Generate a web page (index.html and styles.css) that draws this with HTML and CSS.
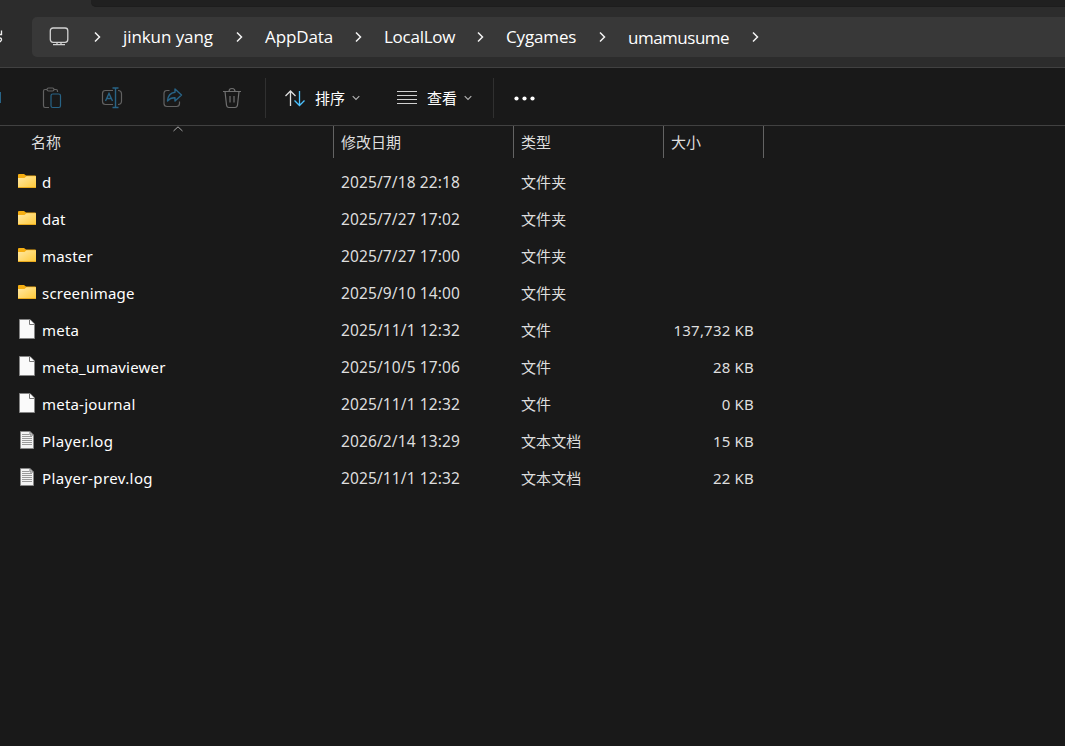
FILE: index.html
```html
<!DOCTYPE html>
<html lang="zh-CN">
<head>
<meta charset="utf-8">
<title>umamusume</title>
<link rel="stylesheet" href="styles.css">
</head>
<body>
<svg class="defs" width="0" height="0">
  <defs>
    <linearGradient id="folder-fill" x1="0" y1="0" x2="1" y2="1"><stop offset="0" stop-color="#ffe9a6"/><stop offset="1" stop-color="#ffc937"/></linearGradient>
    <symbol id="chevron" viewBox="0 0 8 12"><path d="M2 1.5L6.5 6L2 10.5" fill="none" stroke="#f2f2f2" stroke-width="1.5"/></symbol>
    <symbol id="down" viewBox="0 0 8 6"><path d="M.7 1.2L4 4.5L7.3 1.2" fill="none" stroke="#b4b4b4" stroke-width="1.1"/></symbol>
    <symbol id="folder" viewBox="0 0 18 14"><path d="M0 1Q0 0 1 0H6L8 1.5H17Q18 1.5 18 2.5V6H0Z" fill="#f5ae12"/><path d="M0 4H6.5L8.5 2.2H18V14H0Z" fill="url(#folder-fill)"/><path d="M0 13.5H18" stroke="#e9aa1e"/></symbol>
    <symbol id="file" viewBox="0 0 16 20"><path d="M.5 .5H11L15.5 5V19.5H.5Z" fill="#fafafa" stroke="#858585"/><path d="M10.5 .5V5.5H15.5" fill="#fff" stroke="#777"/></symbol>
    <symbol id="text-file" viewBox="0 0 14 18"><path d="M.5 .5H10L13.5 4V17.5H.5Z" fill="#f3f3f3" stroke="#888"/><path d="M10 .5V4H13.5" fill="none" stroke="#777"/><path d="M2 3.5H9M2 5.5H12M2 7.5H12M2 9.5H12M2 11.5H12M2 13.5H12" stroke="#999"/></symbol>
  </defs>
</svg>
<div class="window">
  <div class="tabs"><div class="tab-rest"></div></div>
  <div class="nav">
    <svg class="refresh" width="4" height="16" viewBox="0 0 4 16"><path d="M1.5 1.5V5.5H0M0 9Q1.6 9 1.5 11L0 13" fill="none" stroke="#eee" stroke-width="1.3"/></svg>
    <div class="address">
      <svg class="monitor" width="20" height="20" viewBox="0 0 20 20" fill="none" stroke="#d2d2d2" stroke-width="1.3"><rect x="1.3" y="1" width="17.5" height="14.3" rx="2.7"/><path d="M8 15.5V18M12 15.5V18M4 17.7H16"/></svg>
      <svg class="chev"><use href="#chevron"/></svg>
      <span class="crumb user">jinkun yang</span><svg class="chev"><use href="#chevron"/></svg>
      <span class="crumb appdata">AppData</span><svg class="chev"><use href="#chevron"/></svg>
      <span class="crumb locallow">LocalLow</span><svg class="chev"><use href="#chevron"/></svg>
      <span class="crumb cygames">Cygames</span><svg class="chev"><use href="#chevron"/></svg>
      <span class="crumb current">umamusume</span><svg class="chev"><use href="#chevron"/></svg>
    </div>
  </div>
  <div class="toolbar">
    <div class="edge"></div>
    <div class="tools">
      <svg width="20" height="22" viewBox="0 0 20 22" fill="none" stroke="#626262" stroke-width="1.2"><path d="M5 2.5H3Q1.5 2.5 1.5 4V18.5Q1.5 20.5 3 20.5H7M12 2.5H14Q15.5 2.5 15.5 4V5"/><rect x="5" y="1" width="7" height="3" rx="1.5"/><rect x="9" y="7" width="9.5" height="13.5" rx="1.8" stroke="#286487"/></svg>
      <svg width="22" height="22" viewBox="0 0 22 22" fill="none" stroke="#626262" stroke-width="1.2"><path d="M12 3.5H4.5Q1.5 3.5 1.5 6.5V14.5Q1.5 17.5 4.5 17.5H12M17 3.5Q20.5 3.5 20.5 7V14Q20.5 17.5 17 17.5"/><path d="M4.5 14L8 6.5L11.5 14M6 11.5H10M11.5 1H17.5M14.5 1V20.5M11.5 20.5H17.5" stroke="#286487" stroke-width="1.4"/></svg>
      <svg width="20" height="22" viewBox="0 0 20 22" fill="none" stroke="#626262" stroke-width="1.2"><path d="M6.5 3.5H4Q1 3.5 1 6.5V16.5Q1 19.5 4 19.5H13.5Q16.5 19.5 16.5 16.5V14.5"/><path d="M12 2L18.5 8L12 14V10.8Q7.5 10.5 4.5 14Q5 6 12 5.2Z" stroke="#286487" stroke-width="1.4" stroke-linejoin="round"/></svg>
      <svg width="20" height="22" viewBox="0 0 20 22" fill="none" stroke="#707070" stroke-width="1.2"><path d="M1 4.5H19M7 4.5Q7 1.5 10 1.5T13 4.5M3 4.5L4.5 18Q4.8 20.5 7 20.5H13Q15.2 20.5 15.5 18L17 4.5M8 9V15.5M12 9V15.5"/></svg>
    </div>
    <div class="divider"></div>
    <div class="command sort">
      <svg width="22" height="18" viewBox="0 0 22 18" fill="none" stroke-width="1.3"><path d="M6.5 17V2M1.5 7L6.5 2L11.5 7" stroke="#ddd"/><path d="M15.5 2V16.5M10.5 11.5L15.5 16.5L20.5 11.5" stroke="#4cc2ff"/></svg>
      <span>排序</span><svg class="down"><use href="#down"/></svg>
    </div>
    <div class="command view">
      <svg width="20" height="14" viewBox="0 0 20 14"><path d="M0 .5H20M0 4.5H20M0 8.5H20M0 12.5H20" stroke="#d0d0d0" stroke-width="1.1"/></svg>
      <span>查看</span><svg class="down"><use href="#down"/></svg>
    </div>
    <div class="divider"></div>
    <svg class="more" width="22" height="6" viewBox="0 0 22 6" fill="#fff"><circle cx="2.5" cy="3.5" r="2.1"/><circle cx="10.5" cy="3.5" r="2.1"/><circle cx="18.5" cy="3.5" r="2.1"/></svg>
  </div>
  <div class="columns">
    <div class="heading name-heading">名称<svg class="sort-mark" width="10" height="6" viewBox="0 0 10 6"><path d="M.5 5L5 .8L9.5 5" fill="none" stroke="#aaa"/></svg></div>
    <div class="heading">修改日期</div><div class="heading">类型</div><div class="heading">大小</div>
  </div>
  <div class="files">
    <div class="row"><svg class="folder"><use href="#folder"/></svg><span class="name">d</span><span class="date">2025/7/18 22:18</span><span class="type">文件夹</span><span class="size"></span></div>
    <div class="row"><svg class="folder"><use href="#folder"/></svg><span class="name">dat</span><span class="date">2025/7/27 17:02</span><span class="type">文件夹</span><span class="size"></span></div>
    <div class="row"><svg class="folder"><use href="#folder"/></svg><span class="name">master</span><span class="date">2025/7/27 17:00</span><span class="type">文件夹</span><span class="size"></span></div>
    <div class="row"><svg class="folder"><use href="#folder"/></svg><span class="name">screenimage</span><span class="date">2025/9/10 14:00</span><span class="type">文件夹</span><span class="size"></span></div>
    <div class="row"><svg class="file"><use href="#file"/></svg><span class="name">meta</span><span class="date">2025/11/1 12:32</span><span class="type">文件</span><span class="size">137,732 KB</span></div>
    <div class="row"><svg class="file"><use href="#file"/></svg><span class="name">meta_umaviewer</span><span class="date">2025/10/5 17:06</span><span class="type">文件</span><span class="size">28 KB</span></div>
    <div class="row"><svg class="file"><use href="#file"/></svg><span class="name">meta-journal</span><span class="date">2025/11/1 12:32</span><span class="type">文件</span><span class="size">0 KB</span></div>
    <div class="row"><svg class="text-file"><use href="#text-file"/></svg><span class="name log">Player.log</span><span class="date">2026/2/14 13:29</span><span class="type">文本文档</span><span class="size">15 KB</span></div>
    <div class="row"><svg class="text-file"><use href="#text-file"/></svg><span class="name log">Player-prev.log</span><span class="date">2025/11/1 12:32</span><span class="type">文本文档</span><span class="size">22 KB</span></div>
  </div>
</div>
</body>
</html>
```
FILE: styles.css
```css
* { box-sizing: border-box; }
body { margin: 0; background: #191919; color: #fff; font: 15px/20px "Noto Sans", "Noto Sans CJK SC", sans-serif; }
svg { display: block; flex: none; }
.defs { position: absolute; }
.window { height: 746px; overflow: hidden; display: flex; flex-direction: column; }
.tabs { height: 7px; background: #2c2c2c; padding-left: 91px; }
.tab-rest { height: 7px; background: #202020; border-bottom-left-radius: 5px; border-bottom: 1px solid #1d1d1d; }
.nav { height: 61px; background: #2c2c2c; border-bottom: 1px solid #414141; padding-top: 10px; display: flex; }
.refresh { margin: 12px 28px 0 0; }
.address { flex: 1; height: 40px; background: #383838; border-radius: 5px 0 0 5px; display: flex; align-items: center; padding-left: 17px; }
.monitor { margin-right: 24px; }
.chev { width: 8px; height: 12px; }
.crumb { margin: 0 22px; font-family: "Open Sans", sans-serif; font-size: 17px; line-height: 24px; white-space: nowrap; }
.user { width: 90px; letter-spacing: -.08px; }
.appdata { width: 67px; letter-spacing: -.12px; }
.locallow { width: 70px; letter-spacing: -.25px; }
.cygames { width: 70px; letter-spacing: -.15px; }
.current { width: 101px; padding-top: 1px; letter-spacing: -.5px; }
.toolbar { height: 58px; border-bottom: 1px solid #414141; display: flex; align-items: center; padding-top: 3px; }
.edge { width: 1px; height: 11px; background: #286487; margin: -2px 41px 0 0; }
.tools { width: 223px; display: flex; justify-content: space-between; padding-right: 23px; }
.divider { width: 1px; height: 40px; background: #303030; }
.command { display: flex; align-items: center; font-family: "Noto Sans CJK SC", sans-serif; }
.sort { margin-left: 18px; }
.sort span { margin: 0 7px 0 9px; }
.view { margin: 0 21px 0 37px; }
.view span { margin: 0 7px 0 10px; }
.down { width: 8px; height: 6px; }
.more { margin-left: 20px; }
.columns { height: 33px; display: flex; color: #dedede; }
.heading { position: relative; height: 32px; width: 150px; border-right: 1px solid #636363; padding: 6px 0 0 7px; font-family: "Noto Sans CJK SC", sans-serif; }
.name-heading { width: 334px; padding-left: 31px; }
.heading:nth-child(2) { width: 180px; }
.heading:nth-child(4) { width: 100px; }
.sort-mark { position: absolute; left: 173px; top: 0; }
.files { padding-top: 5px; }
.row { height: 37px; display: flex; align-items: center; padding-left: 18px; }
.row span { padding-bottom: 2px; }
.folder { width: 18px; height: 14px; margin: 0 6px 3px 0; }
.file { width: 16px; height: 20px; margin: 0 7px 3px 1px; }
.text-file { width: 14px; height: 18px; margin: 0 8px 3px 2px; }
.name { width: 299px; letter-spacing: .2px; }
.log { letter-spacing: .4px; }
.date { width: 180px; color: #dedede; font-size: 15.5px; letter-spacing: .12px; }
.type { width: 120px; color: #dedede; font-family: "Noto Sans CJK SC", sans-serif; letter-spacing: .1px; }
.size { width: 113px; color: #dedede; text-align: right; letter-spacing: .2px; }
```
